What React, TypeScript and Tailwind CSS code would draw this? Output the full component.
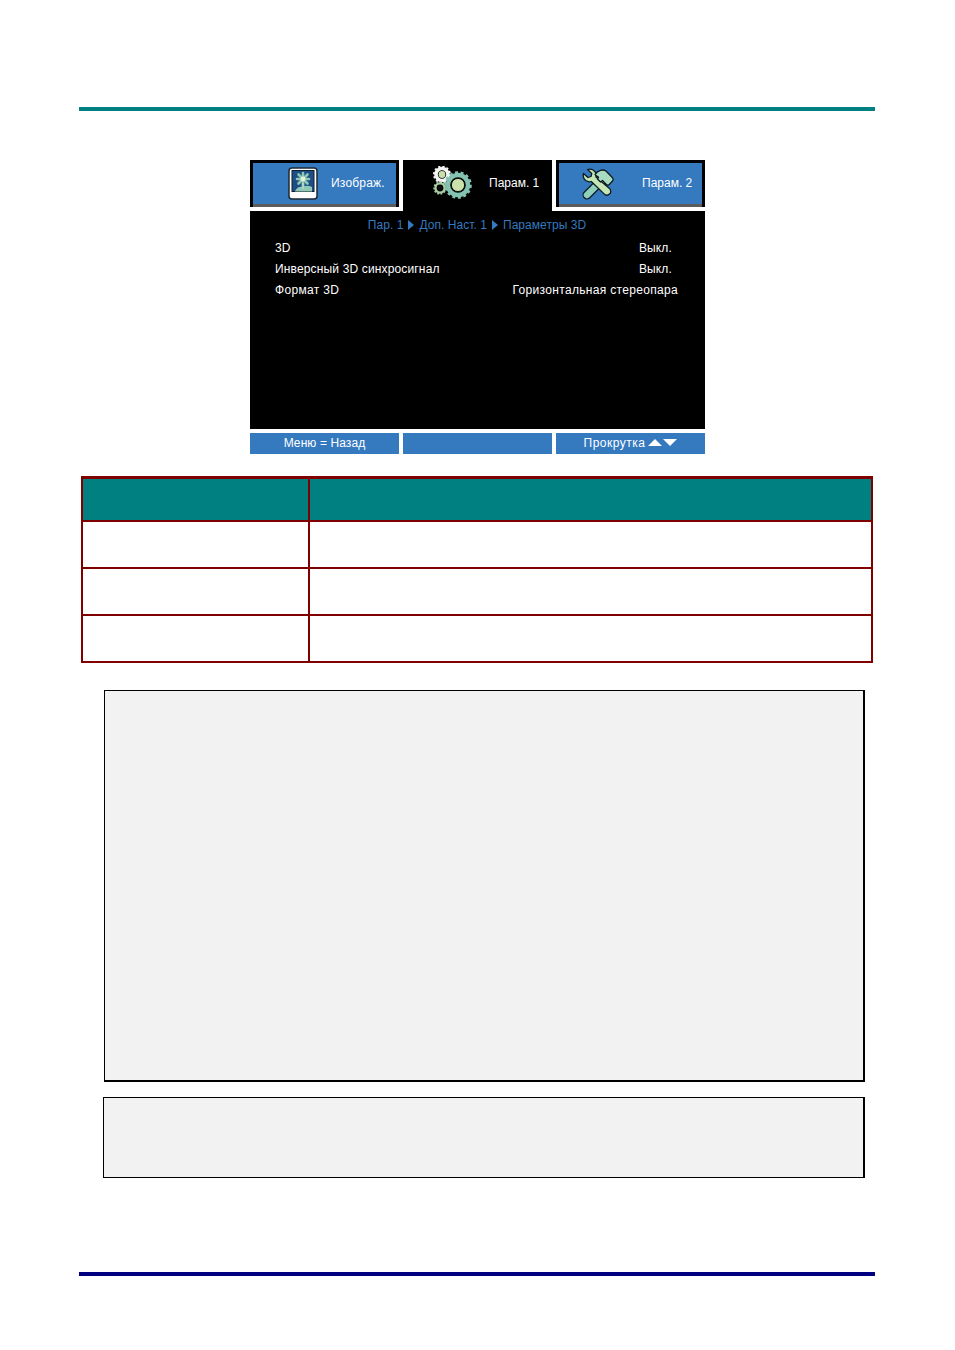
import React from "react";

const osdFont = { fontFamily: '"Liberation Sans", Arial, sans-serif' };

function PictureIcon() {
  return (
    <svg width="30" height="33" viewBox="0 0 30 33" className="shrink-0">
      <rect x="1" y="1" width="28" height="31" rx="3" fill="#fff" stroke="#1c2b33" strokeWidth="1.5" />
      <rect x="4" y="3.5" width="22" height="21" fill="#1d4f86" stroke="#10202c" />
      <g stroke="#8fc8b4" strokeWidth="2.6" strokeLinecap="round">
        <line x1="15" y1="6" x2="15" y2="18" />
        <line x1="9" y1="12" x2="21" y2="12" />
        <line x1="10.5" y1="7.5" x2="19.5" y2="16.5" />
        <line x1="19.5" y1="7.5" x2="10.5" y2="16.5" />
      </g>
      <circle cx="15" cy="12" r="2.4" fill="#e4f2d8" />
      <path d="M7 24c2-4 5-5 8-4 3-2 6-1 9 0v4.500H7z" fill="#8fc8b4" />
      <path d="M15 16v6" stroke="#a9d6c6" strokeWidth="2.4" />
    </svg>
  );
}

function GearsIcon() {
  return (
    <svg width="39" height="33" viewBox="0 0 39 33" className="shrink-0">
      <circle cx="9" cy="8.5" r="6" fill="none" stroke="#f4f4f4" strokeWidth="3.6" />
      <circle cx="9" cy="8.5" r="8" fill="none" stroke="#f4f4f4" strokeWidth="2" strokeDasharray="2.2 2" />
      <circle cx="9" cy="8.5" r="3.4" fill="#c9dfae" />
      <circle cx="7" cy="22" r="4.6" fill="none" stroke="#a9cfa5" strokeWidth="2.4" />
      <circle cx="7" cy="22" r="6" fill="none" stroke="#a9cfa5" strokeWidth="1.4" strokeDasharray="1.8 1.6" />
      <circle cx="7" cy="22" r="2.4" fill="#0b0b0b" />
      <circle cx="25" cy="19" r="10" fill="none" stroke="#84c3b2" strokeWidth="4.4" />
      <circle cx="25" cy="19" r="12.6" fill="none" stroke="#84c3b2" strokeWidth="2.4" strokeDasharray="3 2.6" />
      <circle cx="25" cy="19" r="6.6" fill="#c9e2ac" stroke="#0b0b0b" strokeWidth="1" />
    </svg>
  );
}

function ToolsIcon() {
  return (
    <svg width="33" height="32" viewBox="0 0 33 32" className="shrink-0">
      {/* hammer handle */}
      <path d="M21 12 6 27" stroke="#0e1a20" strokeWidth="9" strokeLinecap="round" />
      <path d="M21 12 6 27" stroke="#8fd0bd" strokeWidth="6.5" strokeLinecap="round" />
      {/* wrench */}
      <path
        d="M2.500 5.500 7 9.500l3-1 .8-3L6.500 1.600c4-1.400 8 .8 8.600 5 .1.900 0 1.700-.2 2.400L28.500 20.500c1.800 1.800 1.500 4.100 0 5.500-1.500 1.400-3.800 1.500-5.400-.1L10.300 13.500c-.9.300-1.800.400-2.800.200-3.900-.700-6-4.300-5-8.200z"
        fill="#c3e6b4"
        stroke="#0e1a20"
        strokeWidth="1.300"
        strokeLinejoin="round"
      />
      {/* hammer head */}
      <path
        d="M14 6.500c3-4.500 8-5.500 11-3.500l6.500 6.800c1 1.200.8 2.200 0 3.200l-3.200 3.500c-1 .9-2 .9-2.900 0L21.500 12.500l-2 1.500-3-3 1-1.700c-1-1-2.200-1.600-3.500-2.800z"
        fill="#a8dcc0"
        stroke="#0e1a20"
        strokeWidth="1.300"
        strokeLinejoin="round"
      />
    </svg>
  );
}

function Tab({ label, pad, gap, tracking, icon }: { label: string; pad: string; gap: string; tracking: string; icon: React.ReactNode }) {
  return (
    <div className="h-[47px] w-[149px] bg-black px-[3px] pt-[3px]">
      <div className={`flex h-[44px] items-center border-b-[3px] border-[#5c5c5c] bg-[#3579bf] ${pad} ${gap}`}>
        {icon}
        <span className={`pb-[1px] text-[12px] text-white ${tracking}`}>{label}</span>
      </div>
    </div>
  );
}

function Crumb() {
  return <span className="mx-[5px] inline-block h-0 w-0 border-y-[5px] border-l-[6px] border-y-transparent border-l-[#3579bf] align-[-1px]" />;
}

const menuRows = [
  { name: "3D", value: "Выкл.", pad: "pr-[33px]", tracking: "tracking-[0.15px]" },
  { name: "Инверсный 3D синхросигнал", value: "Выкл.", pad: "pr-[33px]", tracking: "tracking-[0.15px]" },
  { name: "Формат 3D", value: "Горизонтальная стереопара", pad: "pr-[27px]", tracking: "tracking-[0.32px]" },
];

function OsdMenu() {
  return (
    <div className="ml-[250px] mt-[49px] w-[455px]" style={osdFont}>
      <div className="flex items-start gap-[4px]">
        <Tab label="Изображ." pad="pl-[35px]" gap="gap-[13px]" tracking="tracking-[0.2px]" icon={<PictureIcon />} />
        <div className="flex h-[51px] w-[149px] items-center gap-[17px] bg-black pb-[6px] pl-[30px]">
          <GearsIcon />
          <span className="text-[12px] text-white">Парам. 1</span>
        </div>
        <Tab label="Парам. 2" pad="pl-[22px]" gap="gap-[28px]" tracking="tracking-normal" icon={<ToolsIcon />} />
      </div>
      <div className="h-[218px] bg-black">
        <div className="flex h-[26px] items-center justify-center pr-[1px] pt-[2px] text-[12px] tracking-[0.05px] text-[#3579bf]">
          Пар. 1<Crumb />Доп. Наст. 1<Crumb />Параметры 3D
        </div>
        {menuRows.map((row) => (
          <div key={row.name} className={`flex h-[21px] items-center justify-between pl-[25px] text-[12px] text-white ${row.pad} ${row.tracking}`}>
            <span>{row.name}</span>
            <span>{row.value}</span>
          </div>
        ))}
      </div>
      <div className="mt-[4px] flex gap-[4px]">
        <div className="flex h-[21px] w-[149px] items-center justify-center bg-[#3579bf] pb-[2px] text-[12px] tracking-[0.1px] text-white">Меню = Назад</div>
        <div className="h-[21px] w-[149px] bg-[#3579bf]" />
        <div className="flex h-[21px] w-[149px] items-center justify-center gap-[3px] bg-[#3579bf] pb-[2px] text-[12px] text-white">
          <span className="tracking-[0.5px]">Прокрутка</span>
          <span className="h-0 w-0 border-x-[7px] border-b-[7px] border-x-transparent border-b-white" />
          <span className="-ml-[2px] h-0 w-0 border-x-[7px] border-t-[7px] border-x-transparent border-t-white" />
        </div>
      </div>
    </div>
  );
}

function TableRow({ head }: { head?: boolean }) {
  return (
    <div className={`flex border-t-2 border-[#800000] ${head ? "h-[44px] border-t-[3px] bg-[#008080]" : "h-[47px]"}`}>
      <div className="w-[227px] border-r-2 border-[#800000]" />
      <div className="flex-1" />
    </div>
  );
}

export default function App() {
  return (
    <div className="h-[1350px] w-[955px] overflow-hidden bg-white pt-[107px]">
      <div className="ml-[79px] h-[4px] w-[796px] bg-[#008080]" />
      <OsdMenu />
      <div className="ml-[81px] mt-[22px] w-[792px] border-x-2 border-b-2 border-[#800000]">
        <TableRow head />
        <TableRow />
        <TableRow />
        <TableRow />
      </div>
      <div className="ml-[104px] mt-[27px] h-[392px] w-[761px] border border-b-2 border-r-2 border-black bg-[#f2f2f2]" />
      <div className="ml-[103px] mt-[15px] h-[81px] w-[762px] border border-r-2 border-black bg-[#f2f2f2]" />
      <div className="ml-[79px] mt-[94px] h-[4px] w-[796px] bg-[#000080]" />
    </div>
  );
}
